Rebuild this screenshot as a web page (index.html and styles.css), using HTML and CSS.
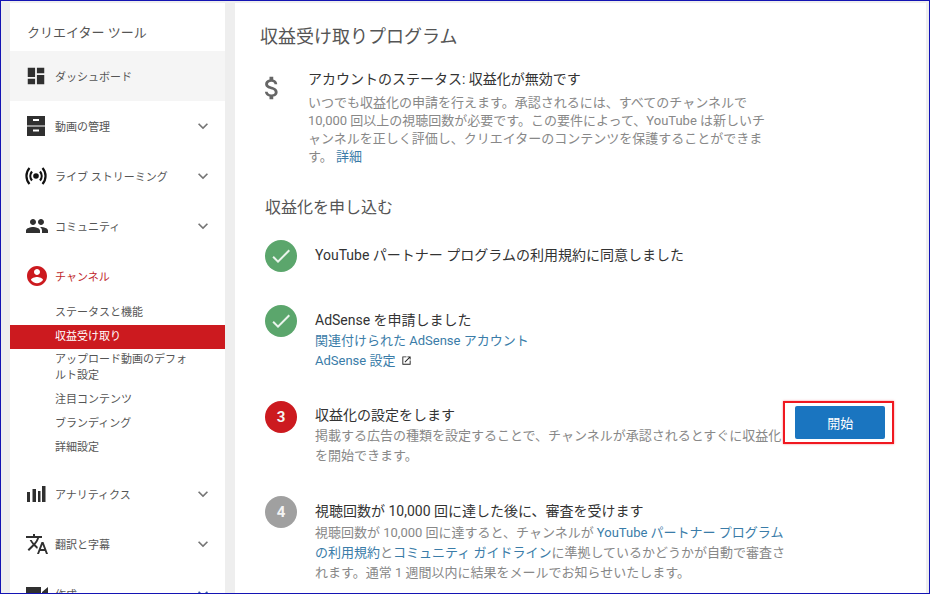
FILE: index.html
```html
<!DOCTYPE html>
<html lang="ja">
<head>
<meta charset="utf-8">
<title>収益受け取りプログラム</title>
<link rel="stylesheet" href="styles.css">
</head>
<body>
<div class="frame">
  <nav class="sidebar">
    <div class="side-title">クリエイター ツール</div>
    <div class="nav-row is-active">
      <svg class="nav-icon nav-icon-dash" viewBox="0 0 24 24"><path d="M3 13h8V3H3v10zm0 8h8v-6H3v6zm10 0h8V11h-8v10zm0-18v6h8V3h-8z"/></svg>
      <span class="nav-label">ダッシュボード</span>
    </div>
    <div class="nav-row">
      <svg class="nav-icon" viewBox="0 0 24 24"><path fill-rule="evenodd" d="M2 2h18v9.500H2zM2 12.500h18V22H2zM8 5v2h6V5zM8 15.500v2h6v-2z"/></svg>
      <span class="nav-label">動画の管理</span>
      <svg class="chev" viewBox="0 0 24 24"><path d="M16.59 8.59L12 13.17 7.41 8.59 6 10l6 6 6-6z"/></svg>
    </div>
    <div class="nav-row">
      <svg class="nav-icon nav-icon-live" viewBox="0 0 24 24"><circle cx="12" cy="12" r="2.800" fill="#111"/><path d="M8 7.500a7 7 0 0 0 0 9M16 7.500a7 7 0 0 1 0 9M5.500 4a12 12 0 0 0 0 16M18.500 4a12 12 0 0 1 0 16" fill="none" stroke="#111" stroke-width="2.200"/></svg>
      <span class="nav-label">ライブ ストリーミング</span>
      <svg class="chev" viewBox="0 0 24 24"><path d="M16.59 8.59L12 13.17 7.41 8.59 6 10l6 6 6-6z"/></svg>
    </div>
    <div class="nav-row">
      <svg class="nav-icon" viewBox="0 0 24 24"><path d="M16 11c1.660 0 2.990-1.340 2.990-3S17.660 5 16 5c-1.660 0-3 1.340-3 3s1.340 3 3 3zm-8 0c1.660 0 2.990-1.340 2.990-3S9.660 5 8 5C6.340 5 5 6.340 5 8s1.340 3 3 3zm0 2c-2.330 0-7 1.170-7 3.500V19h14v-2.500c0-2.330-4.670-3.500-7-3.500zm8 0c-.290 0-.620.020-.970.050 1.160.840 1.970 1.970 1.970 3.450V19h6v-2.500c0-2.330-4.670-3.500-7-3.500z"/></svg>
      <span class="nav-label">コミュニティ</span>
      <svg class="chev" viewBox="0 0 24 24"><path d="M16.59 8.59L12 13.17 7.41 8.59 6 10l6 6 6-6z"/></svg>
    </div>
    <div class="nav-row is-channel">
      <svg class="nav-icon" viewBox="0 0 24 24"><path d="M12 2C6.480 2 2 6.480 2 12s4.480 10 10 10 10-4.480 10-10S17.520 2 12 2zm0 3c1.660 0 3 1.340 3 3s-1.340 3-3 3-3-1.340-3-3 1.340-3 3-3zm0 14.200c-2.500 0-4.710-1.280-6-3.220.030-1.990 4-3.080 6-3.080 1.990 0 5.970 1.090 6 3.080-1.290 1.940-3.500 3.220-6 3.220z"/></svg>
      <span class="nav-label">チャンネル</span>
    </div>
    <ul class="sub-list">
      <li class="sub-item">ステータスと機能</li>
      <li class="sub-item is-selected">収益受け取り</li>
      <li class="sub-item is-double">アップロード動画のデフォルト設定</li>
      <li class="sub-item">注目コンテンツ</li>
      <li class="sub-item">ブランディング</li>
      <li class="sub-item">詳細設定</li>
    </ul>
    <div class="nav-row">
      <svg class="nav-icon" viewBox="0 0 24 24"><path d="M2 10h3v10H2zM7.500 7H11v13H7.500zM13 9h2.500v11H13zM17 4h3.500v16H17z"/></svg>
      <span class="nav-label">アナリティクス</span>
      <svg class="chev" viewBox="0 0 24 24"><path d="M16.59 8.59L12 13.17 7.41 8.59 6 10l6 6 6-6z"/></svg>
    </div>
    <div class="nav-row">
      <svg class="nav-icon" viewBox="0 0 24 24"><path d="M12.870 15.070l-2.540-2.510.030-.030c1.740-1.940 2.980-4.170 3.710-6.530H17V4h-7V2H8v2H1v1.990h11.170C11.500 7.920 10.440 9.750 9 11.350 8.070 10.320 7.300 9.190 6.690 8h-2c.730 1.630 1.730 3.170 2.980 4.560l-5.090 5.020L4 19l5-5 3.110 3.110.760-2.040zM18.500 10h-2L12 22h2l1.120-3h4.750L21 22h2l-4.500-12zm-2.620 7l1.620-4.330L19.120 17h-3.240z"/></svg>
      <span class="nav-label">翻訳と字幕</span>
      <svg class="chev" viewBox="0 0 24 24"><path d="M16.59 8.59L12 13.17 7.41 8.59 6 10l6 6 6-6z"/></svg>
    </div>
    <div class="nav-row">
      <svg class="nav-icon" viewBox="0 0 24 24"><path d="M1 5h15v14H1zM17 10l6-5v14l-6-5z"/></svg>
      <span class="nav-label">作成</span>
      <svg class="chev chev-blue" viewBox="0 0 24 24"><path d="M16.59 8.59L12 13.17 7.41 8.59 6 10l6 6 6-6z"/></svg>
    </div>
  </nav>

  <main class="content">
    <h1 class="page-title">収益受け取りプログラム</h1>

    <section class="status">
      <svg class="dollar" viewBox="0 0 24 24"><path d="M11.800 10.900c-2.270-.590-3-1.200-3-2.150 0-1.090 1.010-1.850 2.700-1.850 1.780 0 2.440.850 2.500 2.100h2.210c-.070-1.720-1.120-3.300-3.210-3.810V3h-3v2.160c-1.940.420-3.500 1.680-3.500 3.610 0 2.310 1.910 3.460 4.700 4.130 2.500.600 3 1.480 3 2.410 0 .690-.490 1.790-2.700 1.790-2.060 0-2.870-.920-2.980-2.100h-2.200c.120 2.190 1.760 3.420 3.680 3.830V21h3v-2.150c1.950-.370 3.500-1.500 3.500-3.550 0-2.840-2.430-3.810-4.700-4.400z"/></svg>
      <div class="status-body">
        <h2 class="status-head">アカウントのステータス: 収益化が無効です</h2>
        <p class="status-text">いつでも収益化の申請を行えます。承認されるには、すべてのチャンネルで<br>10,000 回以上の視聴回数が必要です。この要件によって、YouTube は新しいチ<br>ャンネルを正しく評価し、クリエイターのコンテンツを保護することができま<br>す。 <a class="link">詳細</a></p>
      </div>
    </section>

    <h2 class="section-title">収益化を申し込む</h2>

    <div class="step step-one">
      <div class="badge badge-green"><svg class="check" viewBox="0 0 24 24"><path d="M9 16.170L4.830 12l-1.410 1.410L9 19 21 7l-1.410-1.410z"/></svg></div>
      <div class="step-body"><div class="step-head">YouTube パートナー プログラムの利用規約に同意しました</div></div>
    </div>

    <div class="step step-two">
      <div class="badge badge-green"><svg class="check" viewBox="0 0 24 24"><path d="M9 16.170L4.830 12l-1.410 1.410L9 19 21 7l-1.410-1.410z"/></svg></div>
      <div class="step-body">
        <div class="step-head">AdSense を申請しました</div>
        <div class="step-text"><a class="link">関連付けられた AdSense アカウント</a><br><a class="link">AdSense 設定</a> <svg class="ext" viewBox="0 0 24 24"><path d="M19 19H5V5h7V3H3v18h18v-9h-2v7zM14 3v2h3.590l-9.830 9.830 1.410 1.410L19 6.410V10h2V3h-7z"/></svg></div>
      </div>
    </div>

    <div class="step step-three">
      <div class="badge badge-red">3</div>
      <div class="step-body">
        <div class="step-head">収益化の設定をします</div>
        <div class="step-text step-text-grey">掲載する広告の種類を設定することで、チャンネルが承認されるとすぐに収益化<br>を開始できます。</div>
      </div>
      <div class="highlight"><button class="start-btn">開始</button></div>
    </div>

    <div class="step step-four">
      <div class="badge badge-grey">4</div>
      <div class="step-body">
        <div class="step-head">視聴回数が 10,000 回に達した後に、審査を受けます</div>
        <div class="step-text step-text-grey">視聴回数が 10,000 回に達すると、チャンネルが <a class="link">YouTube パートナー プログラム<br>の利用規約</a>と<a class="link">コミュニティ ガイドライン</a>に準拠しているかどうかが自動で審査さ<br>れます。通常 1 週間以内に結果をメールでお知らせいたします。</div>
      </div>
    </div>
  </main>
</div>
</body>
</html>
```
FILE: styles.css
```css
* { box-sizing: border-box; }
html, body { margin: 0; padding: 0; }
body {
  width: 930px;
  height: 594px;
  overflow: hidden;
  font-family: Roboto, "Noto Sans CJK JP", sans-serif;
}
.frame {
  display: flex;
  gap: 10px;
  width: 930px;
  height: 594px;
  overflow: hidden;
  padding: 2px 3px 0 9px;
  background: #eeeeee;
  border: 1px solid #1414b4;
}
.sidebar {
  flex: 0 0 215px;
  background: #fff;
  height: 640px;
}
.side-title {
  height: 48px;
  padding: 21px 0 0 17px;
  font-size: 13px;
  line-height: 18px;
  color: #555;
}
.nav-row {
  display: flex;
  align-items: center;
  height: 50px;
  padding-left: 15px;
  font-size: 11px;
  color: #555;
}
.nav-row.is-active { background: #f5f5f5; }
.nav-row.is-channel { color: #c0282c; }
.nav-row.is-channel .nav-icon { fill: #cc1a1f; }
.nav-icon {
  flex: none;
  width: 24px;
  height: 24px;
  fill: #303030;
}
.nav-icon-dash { width: 22px; height: 22px; margin-right: 2px; }
.nav-icon-live { margin-left: -1px; margin-right: 1px; }
.nav-label {
  flex: 1;
  margin-left: 6px;
  padding-top: 4px;
  line-height: 16px;
}
.chev {
  flex: none;
  width: 20px;
  height: 20px;
  margin-right: 12px;
  fill: #757575;
}
.chev-blue { fill: #3b5ea8; }
.sub-list {
  list-style: none;
  margin: 0;
  padding: 0 0 9px;
}
.sub-item {
  padding: 4px 30px 4px 45px;
  font-size: 11px;
  line-height: 16px;
  color: #555;
}
.sub-item.is-selected {
  background: #cc1a1f;
  color: #fff;
}
.sub-item.is-double { padding-top: 3px; }
.content {
  flex: 1;
  background: #fff;
  height: 640px;
  padding: 21px 0 0 25px;
}
.page-title {
  margin: 0;
  font-size: 18px;
  line-height: 26px;
  font-weight: 400;
  color: #555;
}
.status {
  display: flex;
  margin-top: 19px;
}
.dollar {
  flex: none;
  width: 30px;
  height: 30px;
  margin: 4px 0 0 -3px;
  fill: #666;
}
.status-body { margin-left: 21px; }
.status-head {
  margin: 0;
  font-size: 14px;
  line-height: 20px;
  font-weight: 400;
  color: #333;
}
.status-text {
  margin: 5px 0 0;
  font-size: 13px;
  line-height: 18px;
  color: #888;
}
.link { color: #3a7ca8; }
.section-title {
  margin: 30px 0 0 5px;
  font-size: 16px;
  line-height: 24px;
  font-weight: 400;
  color: #555;
}
.step {
  display: flex;
  margin-left: 5px;
}
.step-one { margin-top: 20px; }
.step-two { margin-top: 33px; }
.step-three { margin-top: 30px; }
.step-four { margin-top: 30px; }
.badge {
  flex: none;
  display: flex;
  align-items: center;
  justify-content: center;
  width: 32px;
  height: 32px;
  border-radius: 50%;
  font-size: 15px;
  font-weight: 700;
  color: #f4f4f4;
}
.badge-green { background: #5ba66c; }
.badge-red { background: #cc1a1f; }
.badge-grey { background: #a0a0a0; }
.check { width: 24px; height: 24px; fill: #eaf4ec; }
.step-body { margin-left: 18px; padding-top: 4px; }
.step-one .step-body { padding-top: 5px; }
.step-two .step-body { padding-top: 5px; }
.step-four .step-body { padding-top: 5px; }
.step-head {
  font-size: 14px;
  line-height: 20px;
  color: #333;
}
.step-text {
  margin-top: 1px;
  font-size: 13px;
  line-height: 20px;
}
.step-four .step-text { margin-top: 2px; }
.step-text-grey { color: #888; }
.ext { width: 11px; height: 11px; margin-left: 2px; vertical-align: -1px; fill: #222; }
.highlight {
  flex: none;
  align-self: flex-start;
  margin-left: 2px;
  padding: 3px 7px 3px 10px;
  border: 2px solid #f01820;
  box-shadow: 0 0 2px rgba(240,24,32,.5);
}
.start-btn {
  display: block;
  width: 90px;
  height: 33px;
  border: 0;
  border-radius: 2px;
  background: #1a75c0;
  color: #fff;
  font: inherit;
  font-size: 13px;
}
```
